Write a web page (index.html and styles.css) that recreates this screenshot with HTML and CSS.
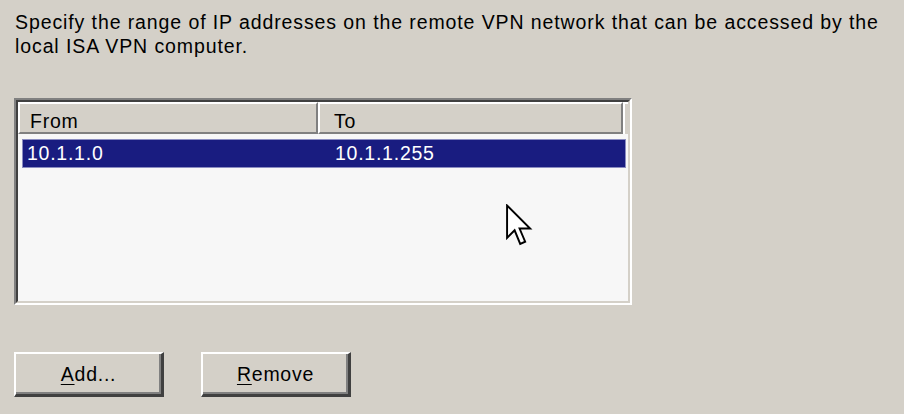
FILE: index.html
```html
<!DOCTYPE html>
<html>
<head>
<meta charset="utf-8">
<link rel="stylesheet" href="styles.css">
</head>
<body>
<div class="page">
  <p class="desc">Specify the range of IP addresses on the remote VPN network that can be accessed by the local ISA VPN computer.</p>
  <div class="listbox">
    <div class="inner">
      <div class="header">
        <div class="hcell from">From</div>
        <div class="hcell to">To</div>
        <div class="hrest"></div>
      </div>
      <div class="row selected">
        <div class="cell from">10.1.1.0</div>
        <div class="cell to">10.1.1.255</div>
      </div>
    </div>
  </div>
  <div class="buttons">
    <button class="btn"><u>A</u>dd...</button>
    <button class="btn"><u>R</u>emove</button>
  </div>
  <svg class="cursor" width="28" height="44" viewBox="0 0 13 20">
    <path d="M0.5 0.5 L0.5 15.5 L4 12 L6.6 18.3 L8.9 17.3 L6.3 11.2 L11.2 11.2 Z" fill="#fff" stroke="#000" stroke-width="0.9" stroke-linejoin="miter"/>
  </svg>
</div>
</body>
</html>
```
FILE: styles.css
```css
html, body {
  margin: 0;
  padding: 0;
  background: #d4d0c8;
}
.page {
  position: relative;
  width: 904px;
  height: 414px;
  font-family: "Liberation Sans", Arial, sans-serif;
  font-size: 19.5px;
  letter-spacing: 0.75px;
  color: #000;
}
.desc {
  margin: 0;
  padding: 10px 0 0 15px;
  width: 885px;
  line-height: 24px;
  letter-spacing: 0.9px;
}
.listbox {
  margin: 40px 0 0 14px;
  width: 614px;
  height: 203px;
  border-style: solid;
  border-width: 2px;
  border-color: #808080 #ffffff #ffffff #808080;
}
.inner {
  height: 199px;
  border-style: solid;
  border-width: 2px;
  border-color: #404040 #d4d0c8 #d4d0c8 #404040;
  background: #f7f7f7;
}
.header {
  display: flex;
  height: 32px;
  background: #d4d0c8;
}
.hcell {
  box-sizing: border-box;
  height: 32px;
  border-style: solid;
  border-width: 2px;
  border-color: #ffffff #808080 #808080 #ffffff;
  padding: 6px 0 0 10px;
  line-height: 22px;
}
.hcell.from { width: 300px; }
.hcell.to { width: 305px; padding-left: 14px; }
.hrest {
  flex: 1;
  border-top: 2px solid #fff;
  border-left: 2px solid #fff;
}
.row {
  display: flex;
  height: 29px;
  margin: 5px 2px 0 4px;
  line-height: 27px;
  box-sizing: border-box;
}
.row.selected {
  background: #191c80;
  color: #fff;
  border: 1px solid #8a8cc0;
}
.cell.from { width: 308px; padding-left: 4px; }
.cell.to { padding-left: 0; }
.buttons {
  display: flex;
  gap: 37px;
  margin: 47px 0 0 14px;
}
.btn {
  box-sizing: border-box;
  width: 150px;
  height: 45px;
  padding: 0;
  background: #d4d0c8;
  font-family: "Liberation Sans", Arial, sans-serif;
  font-size: 19.5px;
  letter-spacing: 0.75px;
  color: #000;
  border-style: solid;
  border-width: 2px 3px 3px 2px;
  border-color: #ffffff #404040 #404040 #ffffff;
  box-shadow: inset -2px -2px 0 #808080;
}
.btn u {
  text-underline-offset: 3px;
}
.cursor {
  position: absolute;
  left: 506px;
  top: 204px;
}
```
